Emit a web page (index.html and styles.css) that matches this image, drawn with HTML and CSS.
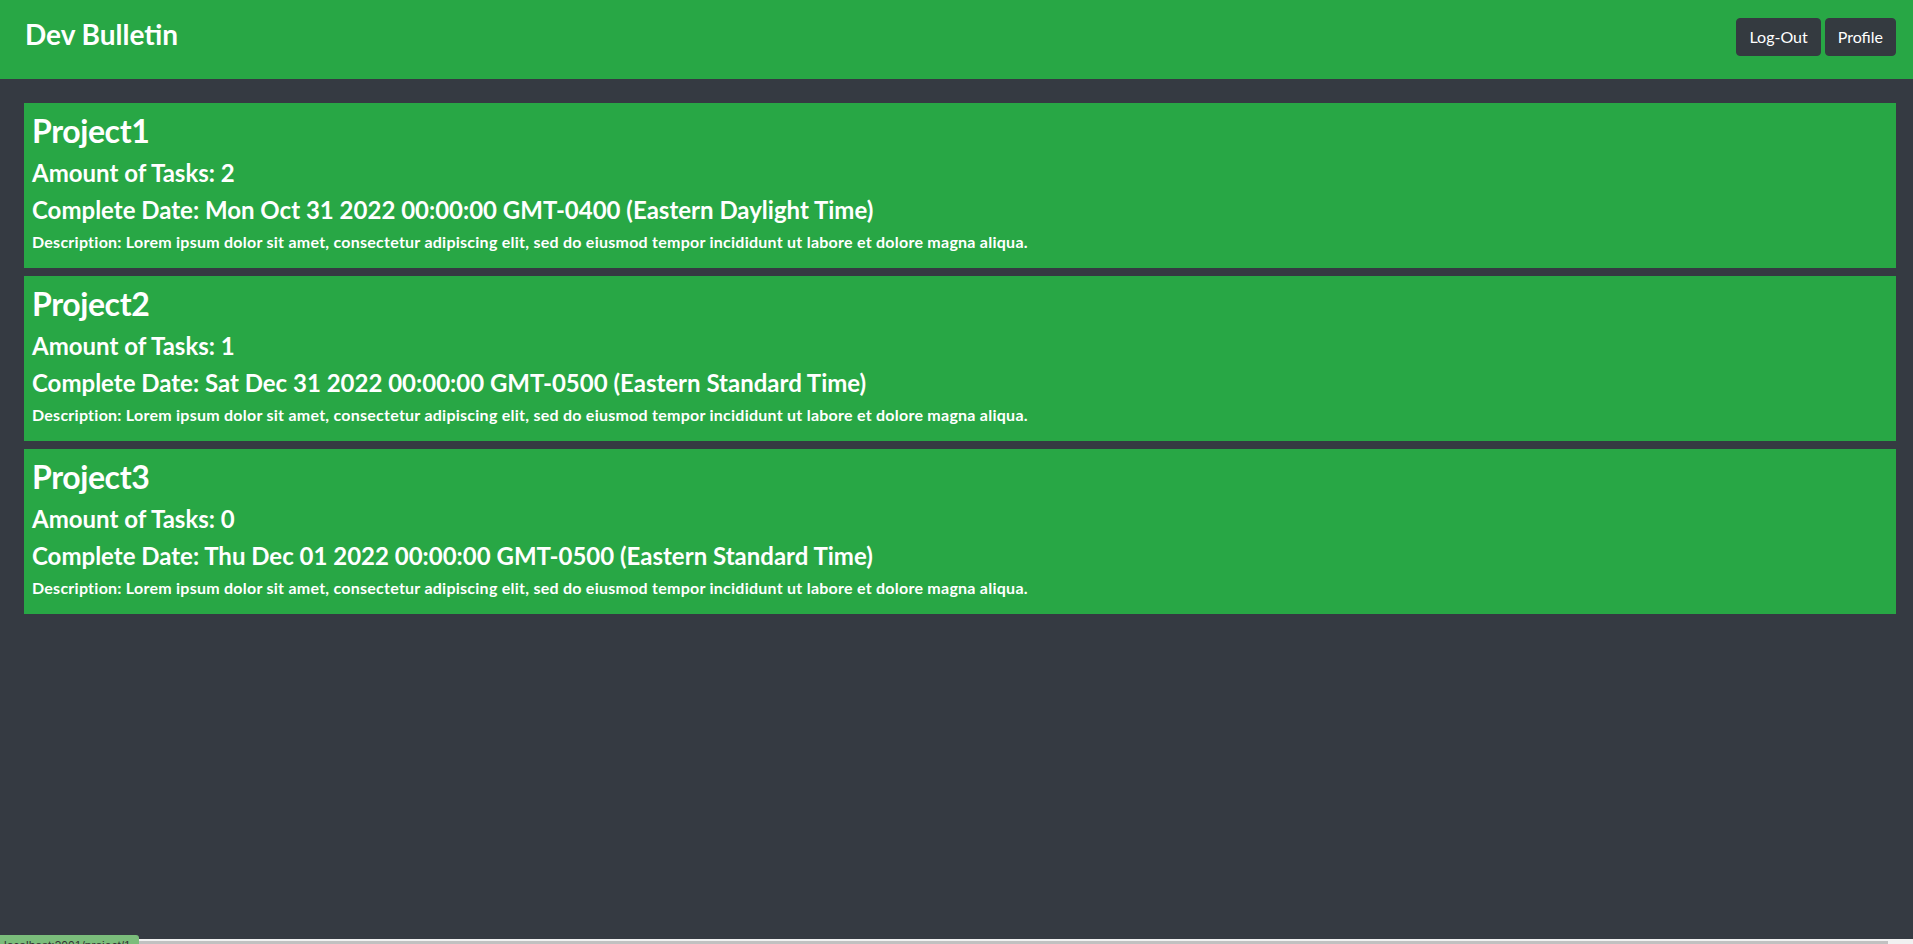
FILE: index.html
```html
<!DOCTYPE html>
<html lang="en">
<head>
<meta charset="utf-8">
<title>Dev Bulletin</title>
<link rel="stylesheet" href="styles.css">
</head>
<body>
<header class="topbar">
  <h3 class="brand">Dev Bulletin</h3>
  <div class="actions">
    <button class="btn">Log-Out</button>
    <button class="btn">Profile</button>
  </div>
</header>
<main class="projects">
  <section class="card">
    <h2 class="title">Project1</h2>
    <h4 class="line">Amount of Tasks: 2</h4>
    <h4 class="line">Complete Date: Mon Oct 31 2022 00:00:00 GMT-0400 (Eastern Daylight Time)</h4>
    <h6 class="desc">Description: Lorem ipsum dolor sit amet, consectetur adipiscing elit, sed do eiusmod tempor incididunt ut labore et dolore magna aliqua.</h6>
  </section>
  <section class="card">
    <h2 class="title">Project2</h2>
    <h4 class="line">Amount of Tasks: 1</h4>
    <h4 class="line">Complete Date: Sat Dec 31 2022 00:00:00 GMT-0500 (Eastern Standard Time)</h4>
    <h6 class="desc">Description: Lorem ipsum dolor sit amet, consectetur adipiscing elit, sed do eiusmod tempor incididunt ut labore et dolore magna aliqua.</h6>
  </section>
  <section class="card">
    <h2 class="title">Project3</h2>
    <h4 class="line">Amount of Tasks: 0</h4>
    <h4 class="line">Complete Date: Thu Dec 01 2022 00:00:00 GMT-0500 (Eastern Standard Time)</h4>
    <h6 class="desc">Description: Lorem ipsum dolor sit amet, consectetur adipiscing elit, sed do eiusmod tempor incididunt ut labore et dolore magna aliqua.</h6>
  </section>
</main>
<div class="scrollbar"><div class="thumb"></div></div>
<div class="status">localhost:3001/project/1</div>
</body>
</html>
```

FILE: styles.css
```css
html, body {
  margin: 0;
  padding: 0;
}
body {
  background: #353a42;
  color: #fff;
  font-family: Lato, "Liberation Sans", sans-serif;
  min-height: 100vh;
  overflow: hidden;
}
.topbar {
  height: 79px;
  box-sizing: border-box;
  background: #28a745;
  display: flex;
  justify-content: space-between;
  align-items: flex-start;
  padding: 17px 17px 0 25px;
}
.brand {
  margin: 0;
  font-size: 28px;
  line-height: 34px;
  font-weight: 700;
}
.actions {
  display: flex;
  gap: 4px;
  padding-top: 1px;
}
.btn {
  font-family: Lato, "Liberation Sans", sans-serif;
  font-size: 16px;
  line-height: 24px;
  color: #fff;
  background: #343a40;
  border: 1px solid #343a40;
  border-radius: 4px;
  padding: 6px 12px;
  cursor: pointer;
}
.projects {
  padding: 24px 17px 0 24px;
  display: flex;
  flex-direction: column;
  gap: 8px;
}
.card {
  background: #28a745;
  padding: 8px;
}
.card h2, .card h4, .card h6 {
  margin: 0 0 8px 0;
}
.title {
  font-size: 32px;
  line-height: 40px;
  font-weight: 700;
  letter-spacing: -0.4px;
  margin-bottom: 7px !important;
}
.line {
  font-size: 24px;
  line-height: 29px;
  font-weight: 700;
}
.desc {
  font-size: 16px;
  line-height: 20px;
  font-weight: 700;
  letter-spacing: 0.25px;
}
.scrollbar {
  position: fixed;
  left: 0;
  right: 0;
  bottom: 0;
  height: 5px;
  background: #f1f1f1;
}
.thumb {
  margin-top: 2px;
  height: 3px;
  width: 1888px;
  background: #c1c1c1;
}
.status {
  position: fixed;
  left: 0;
  bottom: 0;
  width: 139px;
  height: 9px;
  box-sizing: border-box;
  background: #7bbd7b;
  border-top-right-radius: 3px;
  color: #333;
  font-family: "Liberation Sans", sans-serif;
  font-size: 12px;
  line-height: 14px;
  padding: 4px 0 0 4px;
  overflow: hidden;
  white-space: nowrap;
}
```
